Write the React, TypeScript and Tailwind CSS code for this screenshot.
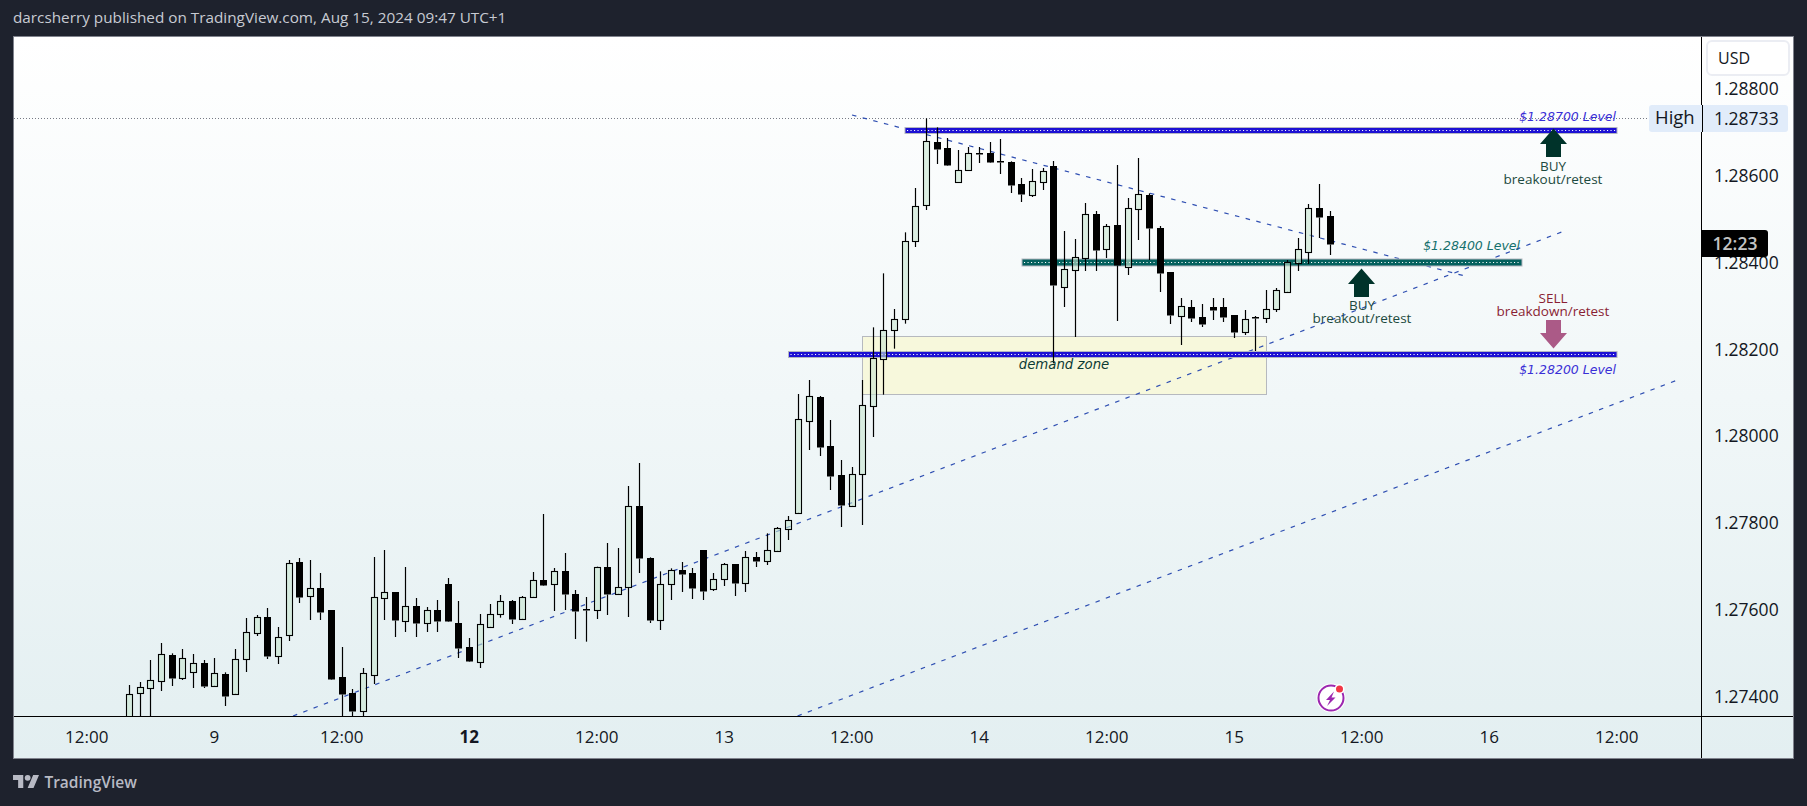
type Raw = [number, number, number, number, number, number];

// candle rows are read off 3x crops: [x, wickTop, bodyTop, bodyBottom, wickBottom, filled]
const leftRows: Raw[] = [
  [88, 555, 583, 660, 660, 0], [121, 546, 562, 580, 650, 0], [151, 480, 541, 563, 650, 0], [184, 429, 463, 542, 573, 0],
  [217, 460, 465, 533, 558, 1], [247, 447, 475, 533, 540, 0], [280, 462, 490, 515, 564, 0], [313, 480, 489, 558, 564, 1],
  [343, 474, 520, 557, 557, 0], [376, 517, 522, 588, 618, 1], [406, 447, 478, 581, 581, 0], [439, 354, 397, 476, 516, 0],
  [472, 345, 352, 398, 408, 0], [502, 324, 351, 468, 477, 1], [535, 381, 412, 467, 492, 0], [568, 180, 190, 404, 423, 0],
  [598, 174, 186, 291, 309, 1], [631, 180, 265, 288, 360, 0], [661, 219, 264, 336, 360, 1], [694, 330, 330, 537, 537, 1],
  [727, 441, 531, 582, 650, 1], [757, 567, 579, 633, 650, 1], [790, 504, 520, 632, 650, 0], [823, 171, 292, 524, 552, 0],
  [853, 150, 277, 293, 360, 0], [886, 276, 276, 360, 411, 1], [916, 201, 319, 362, 396, 0], [949, 294, 318, 369, 411, 1],
  [982, 321, 331, 368, 396, 0], [1012, 300, 330, 363, 396, 1], [1045, 234, 252, 363, 366, 1], [1075, 303, 369, 444, 474, 1],
  [1108, 414, 441, 483, 486, 1], [1141, 342, 373, 485, 504, 0], [1171, 312, 343, 380, 380, 0],
];

const midRows: Raw[] = [
  [1, 795, 814, 853, 863, 0], [37, 810, 813, 866, 882, 1], [67, 798, 802, 866, 866, 0], [100, 726, 751, 800, 800, 0],
  [130, 552, 751, 765, 768, 1], [163, 714, 724, 761, 843, 0], [196, 669, 723, 792, 840, 1], [226, 780, 792, 843, 927, 1],
  [259, 801, 838, 839, 935, 1], [292, 710, 712, 839, 867, 0], [322, 639, 711, 792, 855, 1], [355, 654, 772, 791, 791, 0],
  [385, 468, 529, 770, 861, 0], [418, 399, 528, 684, 729, 1], [451, 682, 684, 870, 879, 1], [481, 724, 763, 869, 900, 0],
  [514, 715, 721, 761, 810, 0], [547, 696, 720, 732, 786, 1], [577, 714, 729, 774, 807, 1], [610, 660, 660, 783, 810, 1],
  [640, 729, 748, 776, 783, 0], [673, 699, 703, 746, 768, 0], [706, 702, 702, 759, 798, 1], [736, 663, 682, 758, 786, 0],
  [769, 666, 681, 693, 711, 1], [802, 610, 661, 692, 705, 0], [832, 591, 595, 662, 662, 0], [865, 558, 571, 596, 630, 0],
  [895, 192, 268, 548, 548, 0], [928, 150, 199, 272, 360, 0], [961, 198, 201, 351, 378, 1], [991, 270, 348, 438, 480, 1],
  [1024, 390, 435, 525, 591, 1], [1057, 411, 433, 527, 527, 0], [1087, 150, 226, 431, 585, 0], [1120, -8, 85, 227, 321, 0],
  [1150, -170, -1, 88, 194, 0], [1183, -63, -33, 0, 56, 0],
];

const rightRows: Raw[] = [
  [16, 397, 424, 656, 671, 0], [46, 264, 319, 422, 441, 0], [79, 55, 124, 316, 330, 0], [112, 82, 127, 146, 192, 1],
  [142, 114, 145, 195, 198, 1], [175, 150, 211, 245, 249, 0], [205, 141, 160, 209, 213, 0], [238, 141, 160, 161, 189, 1],
  [271, 126, 160, 186, 189, 1], [301, 117, 184, 185, 222, 1], [334, 184, 186, 254, 279, 1], [364, 234, 253, 282, 306, 1],
  [397, 207, 244, 284, 291, 0], [430, 204, 214, 245, 270, 0], [460, 183, 198, 555, 790, 1], [493, 393, 508, 560, 621, 0],
  [526, 417, 472, 509, 711, 0], [556, 309, 343, 473, 513, 0], [589, 333, 342, 450, 513, 1], [619, 372, 379, 446, 474, 0],
  [652, 195, 376, 495, 663, 1], [685, 294, 325, 500, 525, 0], [715, 174, 283, 326, 420, 0], [748, 280, 285, 384, 480, 1],
  [781, 378, 384, 519, 576, 1], [811, 516, 516, 645, 672, 1], [844, 594, 619, 647, 735, 0], [874, 600, 621, 654, 666, 1],
  [907, 612, 651, 672, 681, 1], [940, 594, 621, 630, 660, 1], [970, 594, 621, 651, 666, 1], [1003, 645, 645, 696, 714, 1],
  [1036, 630, 658, 695, 705, 0], [1066, 648, 652, 654, 753, 1], [1099, 570, 628, 653, 669, 0], [1129, 564, 571, 626, 636, 0],
  [1162, 480, 487, 575, 575, 0], [1195, 414, 448, 488, 513, 0], [1225, 312, 325, 455, 492, 0], [1258, 252, 324, 351, 414, 1],
  [1291, 333, 348, 432, 465, 1],
];

const toPage = (rows: Raw[], ox: number, oy: number) =>
  rows.map(([x, wt, bt, bb, wb, filled]) => ({
    x: Math.round(ox + x / 3) + 0.5,
    wickTop: oy + wt / 3,
    bodyTop: Math.round(oy + bt / 3) + 0.5,
    bodyBottom: Math.round(oy + bb / 3) + 0.5,
    wickBottom: Math.min(oy + wb / 3, 716),
    filled: filled === 1,
  }));

const candles = [...toPage(leftRows, 100, 500), ...toPage(midRows, 500, 330), ...toPage(rightRows, 900, 100)];

const prices = ['1.28800', '1.28600', '1.28400', '1.28200', '1.28000', '1.27800', '1.27600', '1.27400'];
const times = ['12:00', '9', '12:00', '12', '12:00', '13', '12:00', '14', '12:00', '15', '12:00', '16', '12:00'];

function Band({ x1, x2, y, h, color }: { x1: number; x2: number; y: number; h: number; color: string }) {
  return (
    <g>
      <rect x={x1} y={y - h / 2} width={x2 - x1} height={h} fill={color} stroke="#b4b7c0" strokeWidth={1} />
      <line x1={x1 + 2} x2={x2 - 1} y1={y} y2={y} stroke="#fff" strokeWidth={1.1} strokeDasharray="1.1 2.4" />
    </g>
  );
}

function UpArrow({ x, y, color }: { x: number; y: number; color: string }) {
  return <path d={`M${x} ${y}l13.5 15.5h-6v13h-15v-13h-6z`} fill={color} />;
}

function ChartCanvas() {
  return (
    <svg className="absolute inset-0 w-full h-full" viewBox="14 37 1687 679">
      <line x1={14} x2={1649} y1={118.5} y2={118.5} stroke="#777a85" strokeWidth={1} strokeDasharray="1 2" />

      <rect x={862.5} y={336.5} width={404} height={58} fill="#f7f8dc" stroke="#b6b9bf" strokeWidth={1} />

      <g stroke="#2f4fb2" strokeWidth={1.2} strokeDasharray="4.5 6.5" fill="none">
        <line x1={852} y1={115} x2={1463} y2={275.5} />
        <line x1={293} y1={716} x2={1563} y2={231.5} />
        <line x1={797.5} y1={716} x2={1680} y2={379} />
      </g>

      <Band x1={905} x2={1617} y={130.5} h={6} color="#1c10d4" />
      <Band x1={1022} x2={1522} y={262.5} h={7} color="#04615e" />
      <Band x1={788.5} x2={1617} y={354.5} h={6} color="#1c10d4" />

      {candles.map((c, i) => (
        <g key={i}>
          <line x1={c.x} x2={c.x} y1={c.wickTop} y2={c.bodyTop} stroke="#000" strokeWidth={1.2} />
          <line x1={c.x} x2={c.x} y1={c.bodyBottom} y2={c.wickBottom} stroke="#000" strokeWidth={1.2} />
          {c.filled ? (
            <rect x={c.x - 3.5} y={c.bodyTop - 0.5} width={7} height={Math.max(c.bodyBottom - c.bodyTop + 0.5, 1)} fill="#000" />
          ) : (
            <rect
              x={c.x - 3}
              y={c.bodyTop}
              width={6}
              height={c.bodyBottom - c.bodyTop}
              fill="rgba(200,230,208,0.6)"
              stroke="#000"
              strokeWidth={1.1}
            />
          )}
        </g>
      ))}

      <g className="font-['DejaVu_Sans',sans-serif] italic text-[12.5px]" textAnchor="end">
        <text x={1616} y={120.5} fill="#3a2fd6">$1.28700 Level</text>
        <text x={1520} y={250} fill="#15706c">$1.28400 Level</text>
        <text x={1616} y={373.5} fill="#3a2fd6">$1.28200 Level</text>
      </g>
      <text x={1064} y={368.5} textAnchor="middle" fill="#0b3a33" className="font-['DejaVu_Sans',sans-serif] italic text-[13.3px]">
        demand zone
      </text>

      <UpArrow x={1553.5} y={128.5} color="#00332a" />
      <UpArrow x={1361.5} y={268.5} color="#00332a" />
      <path d="M1553.5 348.5l-13.5-15.5h6v-13h15v13h6z" fill="#ab5a87" />

      <g className="font-['Open_Sans',sans-serif] text-[13.5px]" textAnchor="middle">
        <text x={1553} y={171} fill="#1c4a40">BUY</text>
        <text x={1553} y={184} fill="#1c4a40">breakout/retest</text>
        <text x={1362} y={310} fill="#1c4a40">BUY</text>
        <text x={1362} y={323} fill="#1c4a40">breakout/retest</text>
        <text x={1553} y={302.5} fill="#8a1f33">SELL</text>
        <text x={1553} y={315.5} fill="#8a1f33">breakdown/retest</text>
      </g>

      <circle cx={1331} cy={698} r={14.5} fill="#fff" />
      <circle cx={1331} cy={698} r={12.5} fill="none" stroke="#9c27b0" strokeWidth={2} />
      <path d="M1334 691.5l-8 8.5h4l-3 6 8.5-8.5h-4z" fill="#9c27b0" />
      <circle cx={1339.5} cy={689} r={5} fill="#fff" />
      <circle cx={1339.5} cy={689} r={3.5} fill="#f23645" />
    </svg>
  );
}

function PriceAxis() {
  return (
    <div className="relative w-[92px] shrink-0 border-l border-black text-[17.5px] leading-none text-[#131722]">
      <div className="absolute left-[4px] top-[3px] flex h-[36px] w-[84px] items-center rounded-md border-2 border-[#ebedf3] bg-white pl-[10px] text-[16px]">
        USD
      </div>
      <div className="flex flex-col pt-[43px]">
        {prices.map((p) => (
          <div key={p} className="flex h-[86.86px] items-start">
            <span className="ml-[12px]">{p}</span>
          </div>
        ))}
      </div>
      <div className="absolute -left-[53px] top-[68px] flex h-[27px] w-[139px] items-center rounded-[3px] bg-[#e1ecfa]">
        <span className="ml-[6px] w-[47px] pb-[2px] text-[18.5px]">High</span>
        <span className="h-full w-px bg-black" />
        <span className="ml-[11px]">1.28733</span>
      </div>
      <div className="absolute left-0 top-[193px] flex h-[27px] w-[66px] items-center justify-center rounded-r-[3px] bg-black font-semibold text-[#c4c4c4]">
        12:23
      </div>
    </div>
  );
}

export default function App() {
  return (
    <div className="flex h-screen w-full flex-col overflow-hidden bg-[#1e222d] font-['Open_Sans',sans-serif]">
      <div className="flex h-[36px] shrink-0 items-center pl-[13px] pb-[1px] text-[15.3px] text-[#c8cbd3]">
        darcsherry published on TradingView.com, Aug 15, 2024 09:47 UTC+1
      </div>

      <div className="mx-[13px] flex h-[723px] shrink-0 flex-col border border-[#80838d] bg-linear-to-b from-white to-[#e3eff1]">
        <div className="flex h-[679px] shrink-0">
          <div className="relative flex-1">
            <ChartCanvas />
          </div>
          <PriceAxis />
        </div>
        <div className="flex flex-1 border-t border-black">
          <div className="flex flex-1 items-center pl-[9px] pb-[2px] text-[17px] text-[#131722]">
            {times.map((t, i) => (
              <span key={i} className={`w-[127.5px] shrink-0 text-center ${t === '12' ? 'font-bold' : ''}`}>
                {t}
              </span>
            ))}
          </div>
          <div className="w-[92px] shrink-0 border-l border-black" />
        </div>
      </div>

      <div className="flex flex-1 items-center gap-[5px] pl-[13px]">
        <svg viewBox="0 0 36 28" className="h-[20.5px] w-[26.4px] fill-[#b8bac4]">
          <path d="M14 22H7V11H0V4h14v18zM28 22h-8l7.5-18h8L28 22z" />
          <circle cx={20} cy={8} r={4} />
        </svg>
        <span className="text-[15.5px] font-semibold text-[#b8bac4]">TradingView</span>
      </div>
    </div>
  );
}
